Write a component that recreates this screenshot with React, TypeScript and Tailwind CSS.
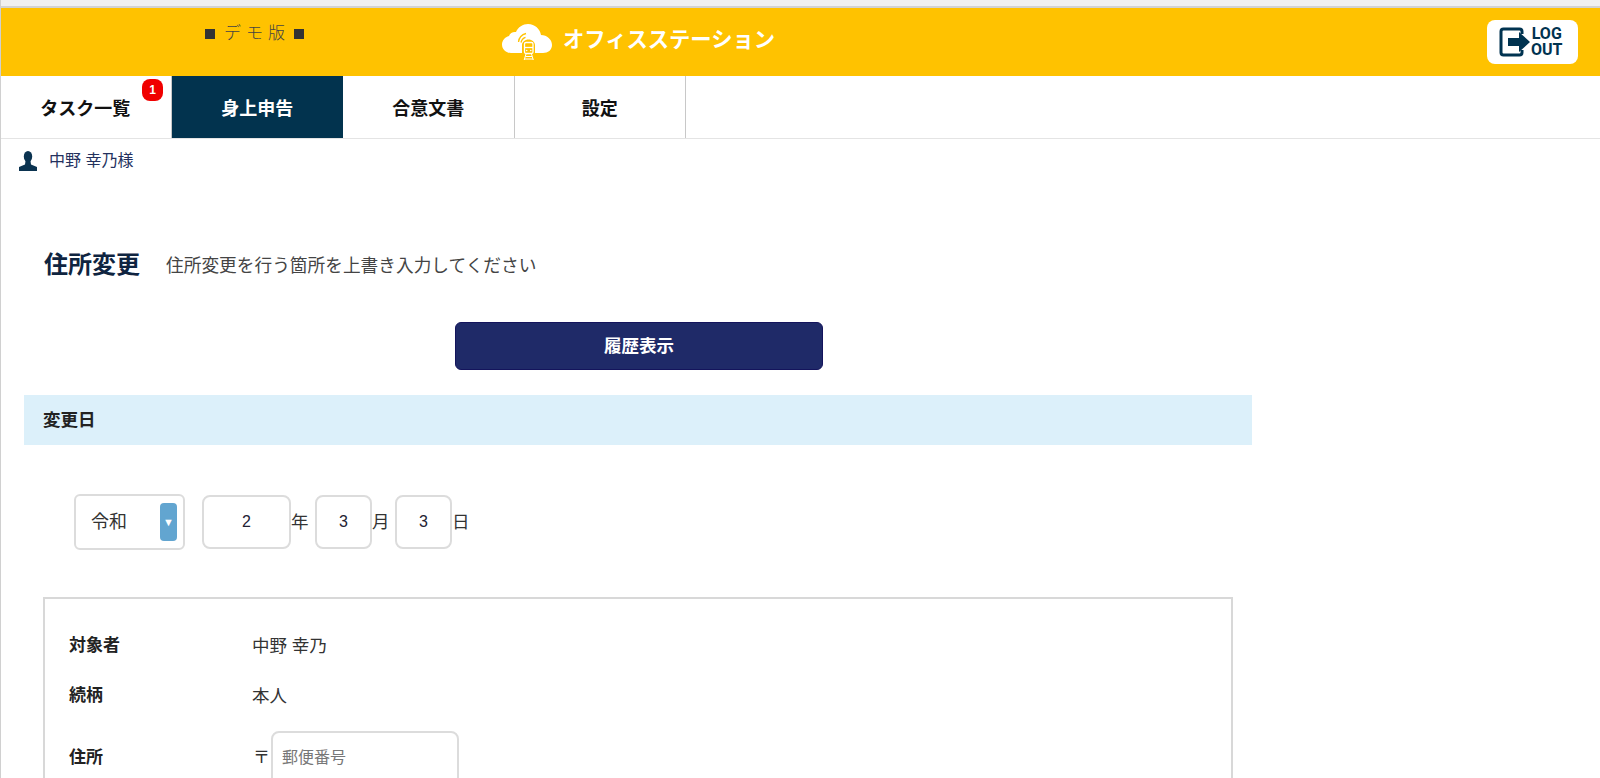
import React from "react";

const tabs = ["タスク一覧", "身上申告", "合意文書", "設定"];

const CloudLogo = () => (
  <svg width="50" height="40" viewBox="0 0 50 40">
    <path
      d="M9 31C4 31 0 27.500 0 22.500c0-4 3-7.500 7-8.500 1-3 4-4.500 7-4 2-5 7-8 12-8 7 0 12 5 13 11 6 0 11 4.500 11 10 0 5-4 8-9 8H33V23c0-3-3-5.500-6.500-5.500S20 20 20 23v8z"
      fill="#fff"
    />
    <path d="M16.500 20c.5-4 3.500-7.500 7.500-8.500M19 20.500c.5-2.500 2-4.500 4.500-5.200" stroke="#ffc200" strokeWidth="1.300" fill="none" />
    <rect x="22.500" y="20.500" width="8.500" height="11" rx="1.500" fill="none" stroke="#fff" strokeWidth="1.300" />
    <path d="M22.500 25.500h8.500" stroke="#fff" strokeWidth="1.300" />
    <circle cx="24.700" cy="28.500" r=".8" fill="#fff" />
    <circle cx="28.800" cy="28.500" r=".8" fill="#fff" />
    <path d="M24 32l-1.800 6M29.500 32l1.800 6M23.500 34.500h6.500M22.500 37h8.500" stroke="#fff" strokeWidth="1" fill="none" />
  </svg>
);

const LogoutIcon = () => (
  <svg width="32" height="30" viewBox="0 0 32 30">
    <path
      d="M23 7V4.500A2.500 2.500 0 0 0 20.500 2h-16A2.500 2.500 0 0 0 2 4.500v21A2.500 2.500 0 0 0 4.500 28h16a2.500 2.500 0 0 0 2.500-2.500V23"
      fill="none"
      stroke="#003350"
      strokeWidth="3"
    />
    <path d="M9 11h11V5l11 10-11 10v-6H9z" fill="#003350" />
  </svg>
);

const UserIcon = () => (
  <svg width="20" height="20" viewBox="0 0 20 20">
    <ellipse cx="10" cy="5.500" rx="4.200" ry="5.500" fill="#0b3350" />
    <path d="M7.500 10h5l.5 3.500 6 2.500v4H1v-4l6-2.500z" fill="#0b3350" />
  </svg>
);

const Row = ({ label, value }: { label: string; value: string }) => (
  <div className="flex items-center h-[50px]">
    <div className="w-[183px] text-[17px] font-bold text-[#222]">{label}</div>
    <div className="text-[17.500px] text-[#333]">{value}</div>
  </div>
);

const App = () => {
  return (
    <div className="h-[778px] overflow-hidden bg-white border-l border-[#d0d0d0] font-['Liberation_Sans','Noto_Sans_CJK_JP',sans-serif]">
      <div className="h-[8px] bg-[#f0f0f0] border-b-2 border-[#d2d2d2] -ml-px" />

      <header className="h-[68px] bg-[#ffc200] flex items-start">
        <div className="ml-[204px] mt-[13px] w-[297px] text-[17px] font-light tracking-[5px] text-[#444] flex items-center">
          <span className="w-[10px] h-[10px] bg-[#333] mr-[9px]" />
          デモ版
          <span className="w-[10px] h-[10px] bg-[#333] ml-[4px]" />
        </div>
        <div className="mt-[14px]">
          <CloudLogo />
        </div>
        <div className="ml-[11px] mt-[17px] text-[21.300px] font-bold text-white">オフィスステーション</div>
        <button className="ml-auto mr-[22px] mt-[12px] w-[91px] h-[44px] bg-white rounded-lg flex items-center pl-[12px]">
          <LogoutIcon />
          <span className="text-[16px] leading-[16px] font-bold text-[#003350] font-['Roboto',sans-serif]">
            LOG
            <br />
            OUT
          </span>
        </button>
      </header>

      <nav className="flex h-[63px] border-b border-[#e4e4e4] -ml-px">
        {tabs.map((tab, i) => (
          <div
            key={tab}
            className={
              i === 1
                ? "relative w-[171.500px] pt-[5px] flex items-center justify-center text-[18px] font-bold bg-[#02334e] text-white"
                : "relative w-[171.500px] pt-[5px] flex items-center justify-center text-[18px] font-bold text-[#111] border-r border-[#c8c8c8]"
            }
          >
            {tab}
            {i === 0 && (
              <span className="absolute left-[142px] top-[3px] w-[21px] h-[22px] rounded-lg bg-[#f00000] text-white text-[12px] font-bold flex items-center justify-center">
                1
              </span>
            )}
          </div>
        ))}
      </nav>

      <div className="flex items-center ml-[17px] mt-[10px] gap-[11px] text-[16px] text-[#24315e]">
        <UserIcon />
        <span>中野 幸乃様</span>
      </div>

      <div className="flex items-center ml-[43px] mt-[77px] gap-[26px]">
        <h1 className="text-[24px] font-bold text-[#0f2440] -mt-[3px]">住所変更</h1>
        <p className="text-[17.700px] text-[#444]">住所変更を行う箇所を上書き入力してください</p>
      </div>

      <div className="ml-[454px] mt-[39px]">
        <button className="w-[368px] h-[48px] rounded-md bg-[#1f2a68] border border-[#14145c] text-white text-[17.500px] font-bold">
          履歴表示
        </button>
      </div>

      <div className="ml-[23px] mt-[25px] w-[1228px] h-[50px] bg-[#dcf0fa] flex items-center pl-[19px] text-[17.500px] font-bold text-[#222]">
        変更日
      </div>

      <div className="flex items-center ml-[73px] mt-[49px] text-[17.500px] text-[#333]">
        <div className="w-[111px] h-[56px] border-2 border-[#dcdcdc] rounded-md flex items-center pl-[15px] justify-between pr-[6px] text-[18px]">
          令和
          <span className="w-[17px] h-[38px] bg-[#62a5d0] rounded-sm flex items-center justify-center text-white text-[11px]">▼</span>
        </div>
        <input
          readOnly
          value="2"
          className="ml-[17px] w-[89px] h-[54px] border-2 border-[#dcdcdc] rounded-lg text-center text-[16px] text-[#223]"
        />
        <span className="w-[24px]">年</span>
        <input
          readOnly
          value="3"
          className="w-[57px] h-[54px] border-2 border-[#dcdcdc] rounded-lg text-center text-[16px] text-[#223]"
        />
        <span className="w-[23px]">月</span>
        <input
          readOnly
          value="3"
          className="w-[57px] h-[54px] border-2 border-[#dcdcdc] rounded-lg text-center text-[16px] text-[#223]"
        />
        <span>日</span>
      </div>

      <section className="ml-[42px] mt-[47px] w-[1190px] h-[300px] border-2 border-[#d8d8d8] pl-[24px] pt-[22px]">
        <Row label="対象者" value="中野 幸乃" />
        <Row label="続柄" value="本人" />
        <div className="flex items-start mt-[10px]">
          <div className="w-[184px] mt-[14px] text-[17px] font-bold text-[#222]">住所</div>
          <div className="mt-[14px] w-[18px] text-[17px] text-[#333]">〒</div>
          <input
            placeholder="郵便番号"
            className="w-[188px] h-[54px] border-2 border-[#dcdcdc] rounded-lg pl-[9px] text-[16px] placeholder:text-[#777]"
          />
        </div>
      </section>
    </div>
  );
};

export default App;
